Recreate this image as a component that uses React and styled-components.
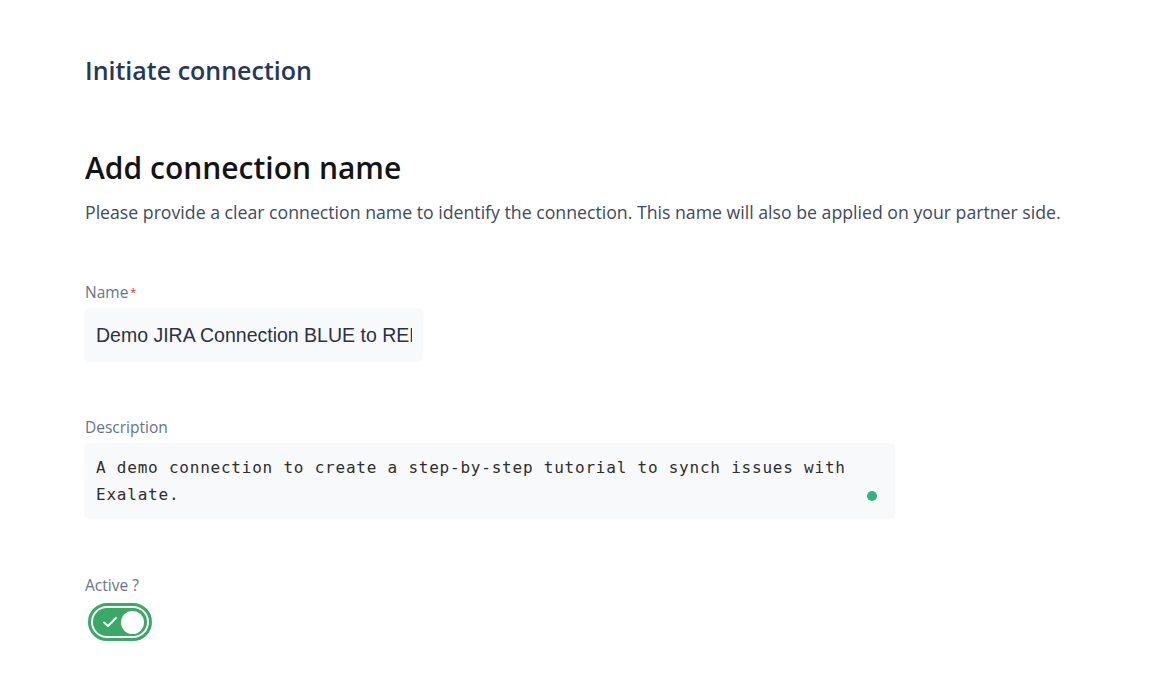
import React from 'react';
import styled, { createGlobalStyle } from 'styled-components';

const GlobalStyle = createGlobalStyle`
  body {
    margin: 0;
    background: #ffffff;
    font-family: "Open Sans", "Noto Sans", sans-serif;
  }
`;

const App = () => {
  return (
    <Page>
      <GlobalStyle />
      <PageTitle>Initiate connection</PageTitle>

      <Heading>Add connection name</Heading>
      <Lead>
        Please provide a clear connection name to identify the connection. This name will also be applied on your partner side.
      </Lead>

      <Field className="first">
        <Label>Name<Req>*</Req></Label>
        <NameInput>
          <span>Demo JIRA Connection BLUE to RED</span>
        </NameInput>
      </Field>

      <Field>
        <Label>Description</Label>
        <TextArea>
          A demo connection to create a step-by-step tutorial to synch issues with Exalate.
          <Dot />
        </TextArea>
      </Field>

      <Field className="toggle">
        <Label>Active ?</Label>
        <Toggle>
          <Track>
            <svg width="16" height="12" viewBox="0 0 16 12">
              <path d="M2 6.5 L6 10 L14 2" fill="none" stroke="#fff" strokeWidth="2" strokeLinecap="round" strokeLinejoin="round" />
            </svg>
            <Knob />
          </Track>
        </Toggle>
      </Field>
    </Page>
  );
};

const Page = styled.div`
  padding: 51px 0 0 85px;
  box-sizing: border-box;
  height: 694px;

  .first {
    margin-top: 58px;
  }
  .toggle {
    margin-top: 57px;
  }
`;

const PageTitle = styled.div`
  font-size: 25px;
  font-weight: 600;
  color: #253858;
  line-height: 38px;
`;

const Heading = styled.h1`
  margin: 59px 0 0;
  font-size: 30px;
  font-weight: 600;
  color: #141414;
  line-height: 40px;
`;

const Lead = styled.p`
  margin: 12px 0 0;
  font-size: 17.7px;
  color: #3d4a60;
  line-height: 24px;
`;

const Field = styled.div`
  margin-top: 56px;
`;

const Label = styled.div`
  font-size: 15.5px;
  font-weight: 500;
  color: #67738a;
  line-height: 20px;
  margin-bottom: 7px;
`;

const Req = styled.span`
  color: #de350b;
  font-size: 11px;
  vertical-align: top;
  margin-left: 2px;
`;

const NameInput = styled.div`
  width: 337px;
  height: 52px;
  box-sizing: border-box;
  background: #f8f9fa;
  border-radius: 4px;
  box-shadow: 0 0 2px rgba(9, 30, 66, 0.08);
  padding: 0 10px 0 11px;
  display: flex;
  align-items: center;
  overflow: hidden;
  white-space: nowrap;
  font-family: "Liberation Sans", Arial, sans-serif;

  span {
    display: block;
    overflow: hidden;
    font-size: 19.5px;
    color: #2a3148;
  }
`;

const TextArea = styled.div`
  position: relative;
  width: 809px;
  height: 74px;
  box-sizing: border-box;
  background: #f8f9fa;
  border-radius: 4px;
  box-shadow: 0 0 2px rgba(9, 30, 66, 0.08);
  padding: 10px 40px 0 11px;
  font-family: "DejaVu Sans Mono", "Liberation Mono", monospace;
  font-size: 16px;
  letter-spacing: 0.78px;
  line-height: 27px;
  color: #2e2e2e;
`;

const Dot = styled.span`
  position: absolute;
  right: 17px;
  bottom: 17px;
  width: 10px;
  height: 10px;
  border-radius: 50%;
  background: #2fb381;
`;

const Toggle = styled.div`
  margin-top: 8px;
  margin-left: 3px;
  width: 64px;
  height: 38px;
  box-sizing: border-box;
  border: 3px solid #3aa866;
  border-radius: 19px;
  padding: 2px;
  background: #fff;
`;

const Track = styled.div`
  height: 100%;
  border-radius: 14px;
  background: #3aa866;
  display: flex;
  align-items: center;
  justify-content: space-between;
  padding: 0 3px 0 9px;
  box-sizing: border-box;
`;

const Knob = styled.span`
  width: 23px;
  height: 23px;
  border-radius: 50%;
  background: #fff;
`;

export default App;
